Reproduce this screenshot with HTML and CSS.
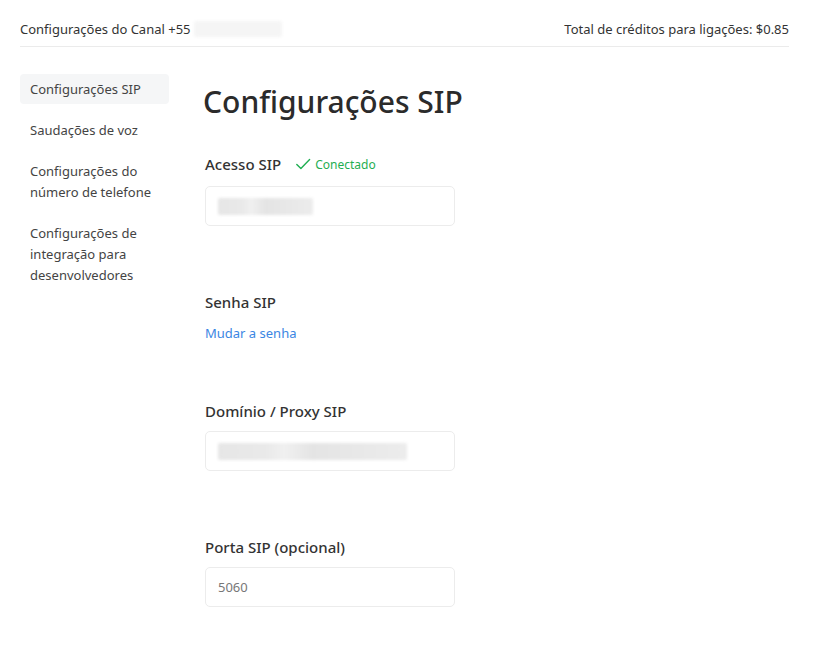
FILE: index.html
```html
<!DOCTYPE html>
<html lang="pt-BR">
<head>
<meta charset="utf-8">
<title>Configurações SIP</title>
<link rel="stylesheet" href="styles.css">
</head>
<body>
<div class="page">
  <header class="topbar">
    <div class="channel">Configurações do Canal +55 <span class="redact redact-head"></span></div>
    <div class="credits">Total de créditos para ligações: $0.85</div>
  </header>
  <div class="layout">
    <nav class="sidebar">
      <a class="nav-item active">Configurações SIP</a>
      <a class="nav-item">Saudações de voz</a>
      <a class="nav-item">Configurações do número de telefone</a>
      <a class="nav-item">Configurações de integração para desenvolvedores</a>
    </nav>
    <main class="content">
      <h1 class="title">Configurações SIP</h1>
      <section class="field">
        <div class="label-row label-row-status">
          <span class="label">Acesso SIP</span>
          <span class="status">
            <svg class="check" viewBox="0 0 16 16" width="16" height="16"><path d="M1.8 8.4l4.1 4.1L14.6 3.6" fill="none" stroke="currentColor" stroke-width="1.4" stroke-linecap="round" stroke-linejoin="round"/></svg>
            Conectado
          </span>
        </div>
        <div class="input"><span class="redact redact-short"></span></div>
      </section>
      <section class="field field-link">
        <div class="label-row"><span class="label">Senha SIP</span></div>
        <a class="link">Mudar a senha</a>
      </section>
      <section class="field">
        <div class="label-row"><span class="label">Domínio / Proxy SIP</span></div>
        <div class="input"><span class="redact redact-long"></span></div>
      </section>
      <section class="field">
        <div class="label-row"><span class="label">Porta SIP (opcional)</span></div>
        <div class="input"><span class="placeholder">5060</span></div>
      </section>
    </main>
  </div>
</div>
</body>
</html>
```

FILE: styles.css
```css
* { box-sizing: border-box; }
html, body { margin: 0; background: #fff; }
body {
  font-family: "Segoe UI", "Noto Sans", "Open Sans", sans-serif;
  color: #333;
  font-size: 13px;
}
.page { padding: 0 31px 0 20px; }
.topbar {
  display: flex;
  justify-content: space-between;
  align-items: center;
  padding: 19px 0 7px;
  border-bottom: 1px solid #ebebeb;
  line-height: 20px;
  color: #333;
}
.channel { display: flex; align-items: center; }
.redact {
  display: inline-block;
  background: linear-gradient(90deg, #e6e6e6 0%, #e9e9e9 25%, #f0f0f0 35%, #e4e4e4 50%, #e8e8e8 75%, #ececec 100%);
  filter: blur(1.5px);
  border-radius: 2px;
}
.redact-head { width: 88px; height: 16px; margin-left: 3px; background: #f5f5f5; }
.redact-short { width: 95px; height: 17px; }
.redact-long { width: 189px; height: 17px; }
.layout { display: flex; padding-top: 27px; }
.sidebar {
  width: 149px;
  flex: none;
  display: flex;
  flex-direction: column;
  gap: 11px;
}
.nav-item {
  display: block;
  padding: 5px 10px 4px;
  line-height: 21px;
  color: #444;
  border-radius: 4px;
}
.nav-item.active { background: #f5f6f7; }
.content { margin-left: 34px; padding-top: 10px; }
.title {
  margin: 0 0 32px;
  font-size: 30px;
  line-height: 36px;
  font-weight: 500;
  color: #2b2b2b;
}
.field { margin-bottom: 66px; padding-left: 2px; }
.field-link { margin-bottom: 58px; }
.label-row { display: flex; align-items: center; gap: 14px; height: 20px; }
.label-row-status { height: 24px; }
.label { font-size: 15px; font-weight: 500; color: #333; }
.status { display: flex; align-items: center; gap: 4px; color: #1fae51; font-size: 12px; }
.check { display: block; }
.input {
  margin-top: 10px;
  width: 250px;
  height: 40px;
  border: 1px solid #ececec;
  border-radius: 5px;
  padding: 0 12px;
  display: flex;
  align-items: center;
}
.placeholder { color: #777; font-size: 13px; }
.link { display: block; margin-top: 11px; line-height: 20px; color: #3b86e3; font-size: 13px; }
```
